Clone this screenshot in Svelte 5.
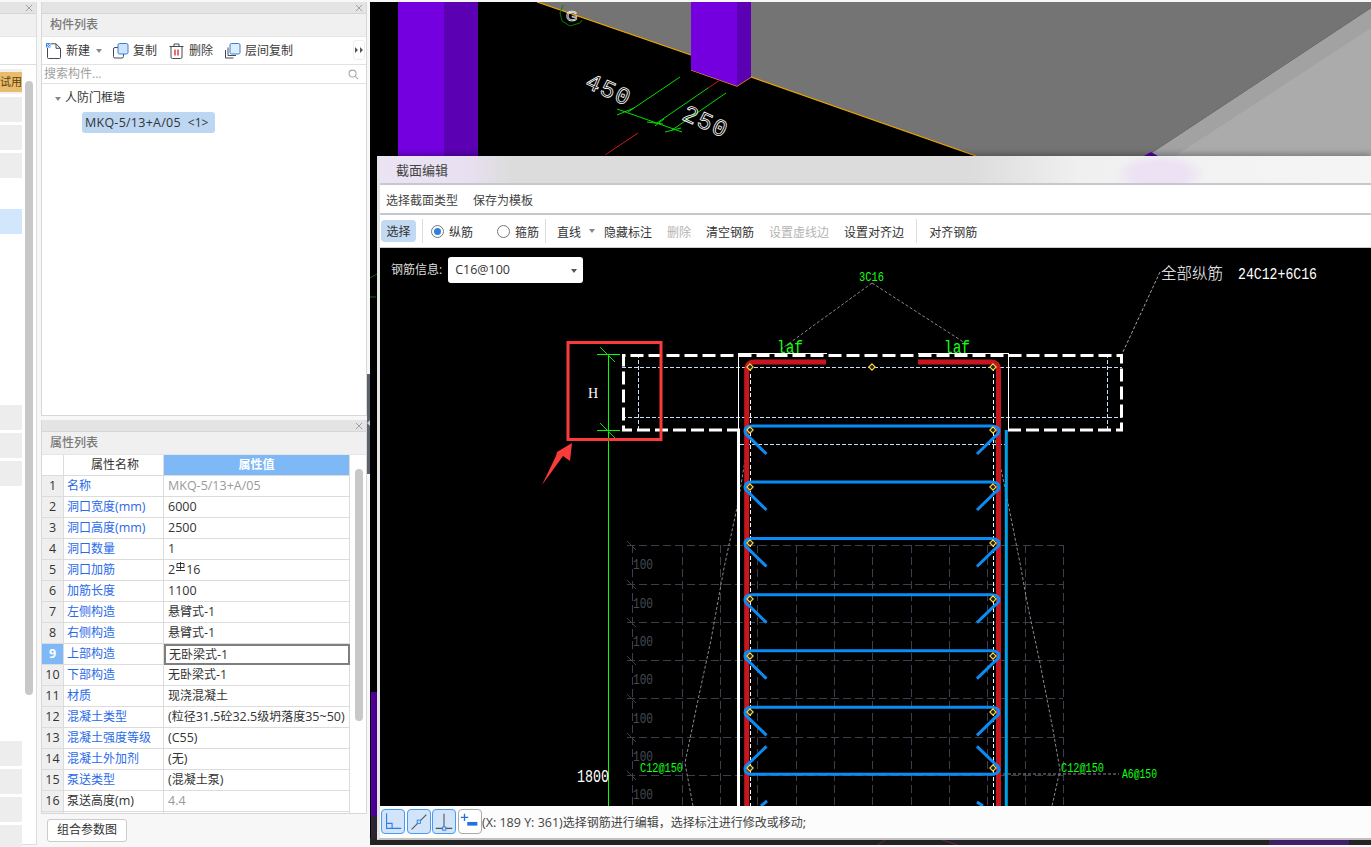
<script>
  const rows = [
    ['名称', 'MKQ-5/13+A/05', 'b', 'g'],
    ['洞口宽度(mm)', '6000', 'b', ''],
    ['洞口高度(mm)', '2500', 'b', ''],
    ['洞口数量', '1', 'b', ''],
    ['洞口加筋', '2|16', 'b', ''],
    ['加筋长度', '1100', 'b', ''],
    ['左侧构造', '悬臂式-1', 'b', ''],
    ['右侧构造', '悬臂式-1', 'b', ''],
    ['上部构造', '无卧梁式-1', 'b', 's'],
    ['下部构造', '无卧梁式-1', 'b', ''],
    ['材质', '现浇混凝土', 'b', ''],
    ['混凝土类型', '(粒径31.5砼32.5级坍落度35~50)', 'b', ''],
    ['混凝土强度等级', '(C55)', 'b', ''],
    ['混凝土外加剂', '(无)', 'b', ''],
    ['泵送类型', '(混凝土泵)', 'b', ''],
    ['泵送高度(m)', '4.4', '', 'g'],
    ['', '', '', '']
  ];
  const gridX = [632, 682, 720, 757, 796, 834, 872, 911, 949, 987, 1025, 1063];
  const gridY = [545, 584, 622, 660, 698, 737, 775];
  const hundreds = [569, 608, 646, 684, 723, 761, 799];
  const stirrupsDown = [426, 482, 538.5, 594.7, 650.7, 707.3];
  const diamonds = [
    [750, 367], [872, 367], [993, 367], [750, 430], [993, 430],
    [750, 487], [993, 487], [750, 543], [993, 543], [750, 599], [993, 599],
    [750, 656], [993, 656], [750, 712], [993, 712], [750, 768], [993, 768]
  ];
  const down = (y) =>
    `M752 ${y}Q745 ${y} 745 ${y + 5}Q745 ${y + 8} 748 ${y + 10}L766.5 ${y + 28}M752 ${y}H991Q999 ${y} 999 ${y + 5}Q999 ${y + 8} 995.5 ${y + 10}L977 ${y + 28}`;
  const up = (y) =>
    `M752 ${y}Q745 ${y} 745 ${y - 5}Q745 ${y - 8} 748 ${y - 10}L766.5 ${y - 28}M752 ${y}H991Q999 ${y} 999 ${y - 5}Q999 ${y - 8} 995.5 ${y - 10}L977 ${y - 28}`;
  const split = (t) => t.split(/([\x20-\x7e]+)/);
</script>

{#snippet mix(t)}{#each split(t) as p, i}{#if i % 2}<span class="lat">{p}</span>{:else}{p}{/if}{/each}{/snippet}

<div class="root">
  <aside class="left">
    <div class="closebar"><svg class="x" viewBox="0 0 9 9"><path d="M1 1l7 7M8 1l-7 7" /></svg></div>
    <div class="title"></div>
    <div class="lbar"></div>
    <div class="ltiles">
      <div class="tag"><span>试用</span></div>
      <div class="tile t1"></div>
      <div class="tile"></div>
      <div class="tile"></div>
      <div class="tile blue"></div>
      <div class="tile t2"></div>
      <div class="tile"></div>
      <div class="tile"></div>
      <div class="tile t3"></div>
      <div class="tile"></div>
      <div class="tile"></div>
      <div class="tile"></div>
      <div class="lscroll"></div>
    </div>
  </aside>

  <section class="mid">
    <div class="panel top">
      <div class="closebar"><svg class="x" viewBox="0 0 9 9"><path d="M1 1l7 7M8 1l-7 7" /></svg></div>
      <div class="title">构件列表</div>
      <div class="tools">
        <svg class="ic i1" viewBox="0 0 16 16"><path d="M1.5 5v9.5q0 1 1 1h11q1 0 1-1V5.5L10 .8H5" fill="none" stroke="#444a55" /><path d="M10 .8v4.5h4.5" fill="none" stroke="#444a55" /><rect x="0" y="0" width="4.5" height="4.5" fill="#3f8ef0" /><path d="M1 1h1v1H1zM3 1h1v1H3zM2 2h1v1H2zM1 3h1v1H1zM3 3h1v1H3z" fill="#cfe3fb" /></svg>
        <span class="tl">新建</span>
        <i class="caret c1"></i>
        <svg class="ic i2" viewBox="0 0 16 16"><rect x=".5" y="4.5" width="10" height="10.5" rx="1.5" fill="#fff" stroke="#444a55" /><rect x="5" y=".5" width="10" height="10.5" rx="1.5" fill="#cfe3fb" stroke="#2f7fe0" /></svg>
        <span class="tl">复制</span>
        <svg class="ic i3" viewBox="0 0 16 16"><path d="M.5 3.5h14M5 3.5V1h5v2.5M2 3.5v10.500q0 1.500 1.500 1.500h8q1.500 0 1.500-1.500V3.500" fill="none" stroke="#444a55" /><path d="M6 6.500v6M9 6.500v6" stroke="#e02020" stroke-width="1.300" /></svg>
        <span class="tl">删除</span>
        <svg class="ic i4" viewBox="0 0 16 16"><path d="M.5 7v8h8M3 4.500v8h8" fill="none" stroke="#444a55" /><rect x="5" y=".5" width="10" height="10.500" rx="1.500" fill="#dfecfc" stroke="#2f7fe0" /></svg>
        <span class="tl">层间复制</span>
        <span class="more"><svg viewBox="0 0 8 6"><path d="M0 0l3 3-3 3zM5 0l3 3-3 3z" fill="#555" /></svg></span>
      </div>
      <div class="search">
        <span>搜索构件...</span>
        <svg viewBox="0 0 12 12"><circle cx="5" cy="5" r="3.800" fill="none" stroke="#aaa" stroke-width="1.200" /><path d="M8 8l3 3" stroke="#aaa" stroke-width="1.200" /></svg>
      </div>
      <div class="tree">
        <div class="node"><i class="caret"></i>人防门框墙</div>
        <div class="leaf"><span class="lat wide">MKQ-5/13+A/05</span><span class="cnt">&lt;1&gt;</span></div>
      </div>
    </div>

    <div class="panel bottom">
      <div class="closebar"><svg class="x" viewBox="0 0 9 9"><path d="M1 1l7 7M8 1l-7 7" /></svg></div>
      <div class="title">属性列表</div>
      <div class="table">
        <div class="row head">
          <div class="no"></div>
          <div class="nm">属性名称</div>
          <div class="val">属性值</div>
        </div>
        {#each rows as r, i}
          <div class="row">
            <div class="no" class:on={i === 8}><span class="lat">{i < 16 ? i + 1 : ''}</span></div>
            <div class="nm" class:blue={r[2] === 'b'}>{@render mix(r[0])}</div>
            <div class="val" class:gray={r[3] === 'g'} class:sel={r[3] === 's'}>
              {#if r[1].includes('|')}
                <span class="lat">2</span><svg class="rebar" viewBox="0 0 9 10"><path d="M1 1.500h7v4H1zM4.500 0v7.500M0 8.500h9" fill="none" stroke="#333" /></svg><span class="lat">16</span>
              {:else}
                {@render mix(r[1])}
              {/if}
            </div>
          </div>
        {/each}
        <div class="pscroll"></div>
      </div>
    </div>
    <div class="foot"><button>组合参数图</button></div>
  </section>

  <div class="split"><i></i></div>

  <main class="view">
    <svg class="scene" viewBox="370 2 1001 843">
      <rect x="370" y="2" width="1001" height="843" fill="#000" />
      <polygon points="537,2 1371,2 1371,8 1147,156 976,156 751,77 737,86 691,70 691,55" fill="#747474" />
      <polygon points="1147,156 1371,8 1371,156" fill="#a2a2a2" />
      <polygon points="1175,156 1371,28 1371,156" fill="#ababab" />
      <path d="M537 2L691 55M691 70L737 86L751 77L976 156" fill="none" stroke="#f0a800" stroke-width="1.200" />
      <rect x="398" y="2" width="46" height="154" fill="#7400e0" />
      <rect x="444" y="2" width="34" height="154" fill="#5c00b4" />
      <polygon points="691,2 737,2 737,86 691,70" fill="#7400e0" />
      <polygon points="737,2 751,2 751,77 737,86" fill="#5c00b4" />
      <polygon points="1144,156 1151,152 1158,156" fill="#5000a8" />
      <path d="M563 5L560 13L562 21L570 26L580 23L582 20" fill="none" stroke="#0a7a0a" />
      <text x="566" y="21" class="g">G</text>
      <g stroke="#00e000" stroke-width="1" fill="none">
        <path d="M617 109L682 132M628 112L680 77M657 123L708 88M672 130L726 93" />
        <path d="M617 115L634 108M655 126L664 119M647 122L663 124M665 132L681 128" />
      </g>
      <path d="M708 88L720 80M638 133L605 155" stroke="#d01818" stroke-width="1" />
      <text class="dim" transform="translate(584 87) rotate(24)">450</text>
      <text class="dim" transform="translate(681 119) rotate(24)">250</text>
      <rect x="371" y="692" width="6" height="124" fill="#5000a0" />
      <rect x="371" y="816" width="6" height="22" fill="#2e2636" />
      <rect x="370" y="838" width="1001" height="7" fill="#252525" />
      <rect x="1269" y="838" width="80" height="7" fill="#42226c" />
      <path d="M878 845L888 838M936 838L958 845" stroke="#6a2a5a" />
      <path d="M370 297h6M370 278l7-4" stroke="#206020" />
    </svg>

    <div class="dialog">
      <div class="dtitle">截面编辑</div>
      <div class="dmenu"><span>选择截面类型</span><span>保存为模板</span></div>
      <div class="dtools">
        <span class="pick">选择</span>
        <i class="sep s1"></i>
        <span class="radio on"></span><span class="rl">纵筋</span>
        <span class="radio r2"></span><span class="rl">箍筋</span>
        <i class="sep s2"></i>
        <span class="tt first">直线</span><i class="caret c2"></i>
        <span class="tt a">隐藏标注</span>
        <span class="tt off">删除</span>
        <span class="tt">清空钢筋</span>
        <span class="tt off">设置虚线边</span>
        <span class="tt">设置对齐边</span>
        <i class="sep s3"></i>
        <span class="tt last">对齐钢筋</span>
      </div>
      <div class="canvas">
        <svg class="draw" viewBox="380 248 991 558">
          <g stroke="#3a3f4b" stroke-dasharray="8 4" fill="none" shape-rendering="crispEdges">
            {#each gridX as x}<path d="M{x} 545V806" />{/each}
            {#each gridY as y}<path d="M627 {y}H1063" />{/each}
          </g>
          <path d="M627 541L636 550M627 580L636 589M627 618L636 627M627 656L636 665M627 694L636 703M627 733L636 742M627 771L636 780" stroke="#3a3f4b" />
          {#each hundreds as y}<text x="633" {y} class="h" textLength="20" lengthAdjust="spacingAndGlyphs">100</text>{/each}

          <g stroke="#9a9a9a" stroke-width=".9" stroke-dasharray="3 2" fill="none">
            <path d="M872 283L780 350M872 283L968 345M750 430L738 503L724 568L711 640L698 700L685 763L693 806M993 430L1008 503L1020 563L1028 607L1040 663L1053 730L1060 770L1052 806M993 774H1119" />
          </g>
          <path d="M1160 272L1122 354" stroke="#ccc" stroke-width=".8" stroke-dasharray="3 2" fill="none" />

          <path d="M622 367H1122M622 417H1122M638 354V430M1107 354V430M740 444H1006" stroke="#c8dcf5" stroke-dasharray="4 2" fill="none" shape-rendering="crispEdges" />
          <path d="M750 367V806M993 367V806" stroke="#fff" stroke-dasharray="4 2.500" fill="none" shape-rendering="crispEdges" />
          <path d="M738 353H827M918 353H1008V430M738 353V430" stroke="#fff" fill="none" shape-rendering="crispEdges" />
          <path d="M738.500 430V806" stroke="#fff" stroke-width="3" />
          <path d="M1006.300 430V806" stroke="#00a0e8" stroke-width="3" />
          <path d="M740 430H623.500V355.500H1121.500V430H1005" stroke="#fff" stroke-width="3" stroke-dasharray="13 5" fill="none" />

          <path d="M746.700 806V370Q746.700 362 754 362H826M918 362H991Q998.500 362 998.500 370V806" stroke="#c8161e" stroke-width="5" fill="none" />
          <g stroke="#0a8cf5" stroke-width="3" fill="none">
            {#each stirrupsDown as y}<path d={down(y)} />{/each}
            <path d={up(774.300)} />
            <path d="M767 801L761 806M977 802L983 806" />
          </g>
          {#each diamonds as d}
            <path d="M{d[0]} {d[1] - 3.200}l3.200 3.200-3.200 3.200-3.200-3.200z" fill="#222" stroke="#ffd83a" stroke-width="1.100" />
          {/each}

          <g stroke="#00ff00" fill="none" shape-rendering="crispEdges">
            <path d="M608 354V806M597 354H620M597 430H620" />
          </g>
          <path d="M600 347L615 362M600 423L615 438" stroke="#00e000" fill="none" />
          <text x="588" y="398" class="w h13">H</text>
          <text x="577" y="782" class="w big18" textLength="32" lengthAdjust="spacingAndGlyphs">1800</text>

          <rect x="568" y="342.500" width="93" height="97" fill="none" stroke="#fb3a3a" stroke-width="3" />
          <polygon points="572,443 570,461 563,456 542,485 556,456 557,452" fill="#fb3a3a" />

          <text x="859" y="281" class="gr s12" textLength="25" lengthAdjust="spacingAndGlyphs">3C16</text>
          <text x="777" y="353" class="gr s18" textLength="26" lengthAdjust="spacingAndGlyphs">laf</text>
          <text x="944" y="353" class="gr s18" textLength="26" lengthAdjust="spacingAndGlyphs">laf</text>
          <text x="640" y="772" class="gr s12" textLength="43" lengthAdjust="spacingAndGlyphs">C12@150</text>
          <text x="1061" y="772" class="gr s12" textLength="43" lengthAdjust="spacingAndGlyphs">C12@150</text>
          <text x="1122" y="778" class="gr s12" textLength="35" lengthAdjust="spacingAndGlyphs">A6@150</text>
          <text x="1161" y="279" class="w cn">全部纵筋</text>
          <text x="1238" y="279" class="w big16" textLength="79" lengthAdjust="spacingAndGlyphs">24C12+6C16</text>
        </svg>
        <div class="info">
          <span>钢筋信息:</span>
          <div class="select"><span class="lat">C16@100</span><i class="caret"></i></div>
        </div>
      </div>
      <div class="status">
        <div class="mode on"><svg viewBox="0 0 24 25"><path d="M5 3.500V20H21M5 14.500H11V20" fill="none" stroke="#2f7fe0" stroke-width="1.200" /></svg></div>
        <div class="mode on"><svg viewBox="0 0 24 25"><path d="M4 21L20 5" stroke="#555" stroke-width="1.200" /><rect x="10" y="11" width="3.500" height="3.500" fill="#cfe3fb" stroke="#2f7fe0" /></svg></div>
        <div class="mode on"><svg viewBox="0 0 24 25"><path d="M12 4V20M3 20H21" stroke="#555" stroke-width="1.200" /><rect x="10.500" y="18.500" width="3.500" height="3.500" fill="#cfe3fb" stroke="#2f7fe0" /></svg></div>
        <div class="mode"><svg viewBox="0 0 24 25"><path d="M6 4V12M2 8H10" stroke="#2070e0" stroke-width="1.400" /><rect x="9" y="13" width="11" height="4" fill="#2070e0" /></svg></div>
        <span class="msg">{@render mix('(X: 189 Y: 361)选择钢筋进行编辑，选择标注进行修改或移动;')}</span>
      </div>
    </div>
  </main>
</div>

<style>
  :global(body) {
    margin: 0;
    background: #f7f7f7;
  }
  .root {
    display: flex;
    width: 1371px;
    height: 847px;
    box-sizing: border-box;
    padding-top: 2px;
    overflow: hidden;
    font: 12px/1.2 "Open Sans", "Noto Sans CJK SC", sans-serif;
    color: #333;
  }
  .lat {
    font-size: 12.5px;
  }
  .wide {
    letter-spacing: 0.25px;
  }
  .cnt {
    margin-left: 7px;
  }
  .left {
    width: 36px;
    height: 842px;
    flex: none;
    background: #fff;
    border-right: 1px solid #ddd;
    border-bottom: 1px solid #ddd;
    box-sizing: content-box;
    display: flex;
    flex-direction: column;
  }
  .closebar {
    height: 11px;
    flex: none;
    background: #e4e4e4;
    border-bottom: 1px solid #d6d6d6;
    display: flex;
    justify-content: flex-end;
    align-items: center;
    padding-right: 3px;
  }
  .x {
    width: 8px;
    height: 8px;
  }
  .x path {
    stroke: #9a9a9a;
    stroke-width: 1;
  }
  .title {
    height: 22px;
    flex: none;
    line-height: 22px;
    background: #f0f0f0;
    padding-left: 8px;
    color: #7a7a7a;
    font-weight: 500;
    border-bottom: 1px solid #e6e6e6;
  }
  .lbar {
    height: 27px;
    flex: none;
    border-bottom: 1px solid #ddd;
  }
  .ltiles {
    position: relative;
    flex: 1;
    padding-top: 4px;
  }
  .tag {
    width: 22px;
    height: 25px;
    background: #f0f0f0;
    padding: 3px 0;
    box-sizing: border-box;
  }
  .tag span {
    display: block;
    height: 20px;
    background: #e9bc6c;
    overflow: hidden;
    font-size: 11px;
    line-height: 20px;
    direction: rtl;
    color: #5a4010;
  }
  .tile {
    width: 22px;
    height: 25px;
    background: #ededed;
    margin-top: 3px;
  }
  .t1 {
    margin-top: 3px;
  }
  .tile.blue {
    background: #d2e6fc;
    margin-top: 31px;
  }
  .t2 {
    margin-top: 171px;
  }
  .t3 {
    margin-top: 255px;
  }
  .lscroll {
    position: absolute;
    left: 25px;
    top: 16px;
    width: 8px;
    height: 614px;
    border-radius: 4px;
    background: #c8c8c8;
  }
  .mid {
    width: 326px;
    margin-left: 4px;
    flex: none;
    display: flex;
    flex-direction: column;
  }
  .panel {
    background: #fff;
    border: 1px solid #d8d8d8;
    border-top: 0;
    display: flex;
    flex-direction: column;
    box-sizing: border-box;
  }
  .panel.top {
    height: 414px;
  }
  .panel.bottom {
    height: 394px;
    margin-top: 4px;
  }
  .tools {
    height: 27px;
    flex: none;
    display: flex;
    align-items: center;
    border-bottom: 1px solid #e2e2e2;
    position: relative;
  }
  .ic {
    width: 16px;
    height: 16px;
    flex: none;
  }
  .i1 {
    margin-left: 4px;
  }
  .tl {
    margin: 2px 0 0 4px;
    color: #3a3a3a;
  }
  .caret {
    display: inline-block;
    width: 0;
    height: 0;
    border: 3px solid transparent;
    border-top: 4px solid #888;
    border-bottom: 0;
  }
  .c1 {
    margin-left: 6px;
  }
  .i2 {
    margin-left: 11px;
  }
  .i3 {
    margin-left: 12px;
  }
  .i4 {
    margin-left: 12px;
  }
  .more {
    position: absolute;
    right: 1px;
    top: 3px;
    width: 10px;
    height: 18px;
    border: 1px solid #eee;
    border-radius: 3px;
    display: flex;
    align-items: center;
    justify-content: center;
  }
  .more svg {
    width: 8px;
    height: 6px;
  }
  .search {
    height: 18px;
    flex: none;
    display: flex;
    align-items: center;
    justify-content: space-between;
    padding: 0 7px 0 2px;
    color: #a0a0a0;
    border-bottom: 1px solid #e2e2e2;
  }
  .search svg {
    width: 11px;
    height: 11px;
  }
  .tree {
    padding: 4px 0 0 13px;
  }
  .node {
    height: 21px;
    display: flex;
    align-items: center;
    color: #333;
  }
  .node .caret {
    margin-right: 4px;
  }
  .leaf {
    margin: 3px 0 0 27px;
    width: 133px;
    box-sizing: border-box;
    height: 21px;
    line-height: 21px;
    padding: 0 0 0 3px;
    background: #bdd7f2;
    border-radius: 3px;
  }
  .table {
    position: relative;
    flex: 1;
    overflow: hidden;
  }
  .row {
    display: grid;
    grid-template-columns: 22px 100px 186px;
    height: 21px;
    box-sizing: border-box;
  }
  .row > div {
    border-right: 1px solid #dcdcdc;
    border-bottom: 1px solid #dcdcdc;
    line-height: 20px;
    white-space: nowrap;
    box-sizing: border-box;
    padding-left: 3px;
  }
  .row .val {
    padding-left: 4px;
  }
  .row .no {
    background: #efefef;
    padding: 0;
    text-align: center;
  }
  .row .no.on {
    background: #7eb8f7;
    color: #fff;
    font-weight: 700;
  }
  .head .no {
    background: #fff;
  }
  .head .nm {
    text-align: center;
    background: #fff;
  }
  .row.head .val {
    background: #7eb8f7;
    color: #fff;
    font-weight: 700;
    text-align: center;
    padding-left: 0;
  }
  .blue {
    color: #2a6ae8;
  }
  .gray {
    color: #9a9a9a;
  }
  .row .sel {
    border: 2px solid #7f7f7f;
    line-height: 17px;
    padding-left: 3px;
  }
  .rebar {
    width: 9px;
    height: 10px;
    margin: 0 1px;
    vertical-align: 2px;
  }
  .pscroll {
    position: absolute;
    left: 313px;
    top: 14px;
    width: 8px;
    height: 252px;
    border-radius: 4px;
    background: #c8c8c8;
  }
  .foot {
    padding: 5px 0 0 6px;
  }
  .foot button {
    width: 80px;
    height: 23px;
    padding: 0;
    background: #fff;
    border: 1px solid #ccc;
    border-radius: 3px;
    font: inherit;
    color: #333;
  }
  .split {
    width: 4px;
    height: 100px;
    margin-top: 372px;
    flex: none;
    background: #5a6470;
    position: relative;
  }
  .split i {
    position: absolute;
    left: 0;
    top: 46px;
    border: 3px solid transparent;
    border-right: 3px solid #ccc;
    border-left: 0;
  }
  .view {
    position: relative;
    width: 1000px;
    height: 843px;
    flex: none;
  }
  .scene {
    display: block;
    width: 1001px;
    height: 843px;
    margin-left: -1px;
  }
  .g {
    fill: none;
    stroke: #fff;
    stroke-width: 0.7;
    font: 15px "Liberation Sans", sans-serif;
  }
  .dim {
    font: 24px "Liberation Mono", monospace;
    letter-spacing: 1.500px;
    fill: none;
    stroke: #fff;
    stroke-width: 0.8;
  }
  .dialog {
    position: absolute;
    left: 6px;
    right: 0;
    top: 154px;
    height: 682px;
    display: flex;
    flex-direction: column;
    background: #fff;
    border-left: 3px solid #e4e4e4;
    border-bottom: 2px solid #c0c0c0;
    box-shadow: 0 -2px 6px rgba(0, 0, 0, 0.3);
  }
  .dtitle {
    height: 27px;
    flex: none;
    line-height: 29px;
    padding-left: 16px;
    font-size: 13px;
    color: #444;
    border-bottom: 2px solid #c5c8cc;
    background: radial-gradient(ellipse 46px 20px at 780px 18px, #ece2f4 60%, transparent 100%),
      linear-gradient(90deg, #ece4f4 0, #e8e0f0 90px, #dcdcdc 130px, #dcdcdc 590px, #f0f0f0 700px, #f5f5f5 100%);
  }
  .dmenu {
    flex: none;
    display: flex;
    align-items: center;
    gap: 15px;
    padding: 5px 0 0 6px;
    box-sizing: border-box;
    color: #444;
    border-bottom: 2px solid #c5c8cc;
    height: 30px;
  }
  .dtools {
    height: 32px;
    flex: none;
    display: flex;
    align-items: center;
    padding-left: 1px;
    border-bottom: 1px solid #ccc;
    box-sizing: content-box;
    color: #333;
  }
  .dtools > span:not(.radio):not(.pick) {
    position: relative;
    top: 2px;
  }
  .pick {
    width: 35px;
    height: 22px;
    line-height: 24px;
    text-align: center;
    background: #c2d9f2;
    border-radius: 4px;
  }
  .sep {
    width: 1px;
    height: 24px;
    background: #ddd;
    flex: none;
  }
  .s1 {
    margin: 0 8px 0 6px;
  }
  .s2 {
    margin: 0 0 0 6px;
  }
  .s3 {
    margin: 0 0 0 12px;
  }
  .radio {
    width: 13px;
    height: 13px;
    box-sizing: border-box;
    border: 1px solid #777;
    border-radius: 50%;
    flex: none;
    background: #fff;
    display: flex;
    align-items: center;
    justify-content: center;
  }
  .radio.on::after {
    content: "";
    width: 7px;
    height: 7px;
    border-radius: 50%;
    background: #2f7fe0;
  }
  .rl {
    margin-left: 5px;
  }
  .r2 {
    margin-left: 24px;
  }
  .tt {
    margin-left: 15px;
  }
  .tt.first {
    margin-left: 11px;
  }
  .tt.a {
    margin-left: 9px;
  }
  .tt.last {
    margin-left: 12px;
  }
  .tt.off {
    color: #b4b4b4;
  }
  .c2 {
    margin-left: 8px;
  }
  .canvas {
    position: relative;
    height: 558px;
    flex: none;
    background: #000;
    overflow: hidden;
  }
  .draw {
    display: block;
    width: 991px;
    height: 558px;
  }
  .h {
    fill: #444a55;
    font: 14px "Liberation Mono", monospace;
  }
  .w {
    fill: #fff;
  }
  .h13 {
    font: 14px "Liberation Serif", serif;
  }
  .big18 {
    font: 18px "Liberation Mono", monospace;
  }
  .big16 {
    font: 16px "Liberation Mono", monospace;
  }
  .cn {
    font: 300 15.500px "Noto Sans CJK SC", sans-serif;
  }
  .gr {
    fill: #14ff14;
  }
  .s12 {
    font: 12px "Liberation Mono", monospace;
  }
  .s18 {
    font: 18px "Liberation Mono", monospace;
  }
  .info {
    position: absolute;
    left: 11px;
    top: 9px;
    display: flex;
    align-items: center;
    gap: 6px;
    color: #ddd;
  }
  .select {
    width: 135px;
    height: 26px;
    line-height: 26px;
    box-sizing: border-box;
    padding-left: 7px;
    background: #fff;
    border-radius: 3px;
    color: #333;
    position: relative;
  }
  .select .caret {
    position: absolute;
    right: 6px;
    top: 12px;
    border-top-color: #555;
  }
  .status {
    flex: 1;
    display: flex;
    align-items: flex-start;
    gap: 1.500px;
    padding: 3px 0 0 1px;
    background: #fcfcfc;
  }
  .mode {
    width: 24px;
    height: 25px;
    flex: none;
    box-sizing: border-box;
    border: 1px solid #aaa;
    border-radius: 4px;
    background: #fff;
  }
  .mode.on {
    border-color: #4a9af0;
    background: #d2e4fa;
  }
  .mode svg {
    display: block;
    width: 100%;
    height: 100%;
  }
  .msg {
    line-height: 27px;
    color: #444;
    white-space: nowrap;
    margin-left: -1px;
  }
</style>
